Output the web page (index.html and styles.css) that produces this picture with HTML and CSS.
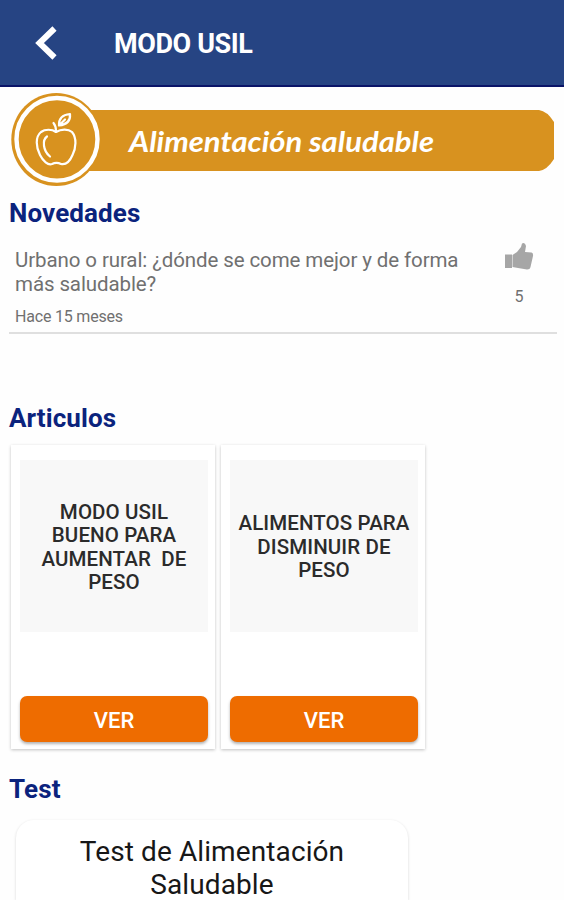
FILE: index.html
```html
<!DOCTYPE html>
<html lang="es">
<head>
    <meta charset="UTF-8">
    <meta name="viewport" content="width=device-width, initial-scale=1.0">
    <title>MODO USIL</title>
    <link rel="stylesheet" href="styles.css">
</head>
<body>

<header>
    <button class="back" aria-label="Volver">
        <svg width="24" height="36" viewBox="0 0 24 36"><path d="M20.5 3.500 L5.500 18 L20.5 32.500" fill="none" stroke="#fff" stroke-width="6"/></svg>
    </button>
    <h1>MODO USIL</h1>
</header>

<main>
    <svg class="banner" width="564" height="106" viewBox="0 87 564 106" role="img">
        <path d="M60 110 H539 Q547 111 554 122 V159 Q547 170 539 171 H60 Z" fill="#d8921f"/>
        <ellipse cx="56.3" cy="139.500" rx="45" ry="46.500" fill="#d8921f"/>
        <ellipse cx="57" cy="139.300" rx="40.500" ry="41.300" fill="none" stroke="#fff" stroke-width="4.400"/>
        <g fill="none" stroke="#fff" stroke-width="2.2" stroke-linecap="round" stroke-linejoin="round">
            <path d="M56 132 C52 129 45 129 41 132 C35 137 36 147 40 155 C43 161 48 165.500 52 164 C55 162.500 58 162.500 61 164 C66 165 70 161 72.500 155 C76 148 77 138 72 132 C68 128.500 61 129 56 132 Z"/>
            <path d="M56 131 Q56 126 53.500 123"/>
            <path d="M59 125.500 Q58.500 115 70 114 Q71 124 59 125.500 L65 119.500"/>
            <path d="M47 136.500 C42 140 43 151 50 156.500"/>
        </g>
        <text class="banner-text" x="129" y="151.500" textLength="305" lengthAdjust="spacingAndGlyphs">Alimentación saludable</text>
    </svg>

    <h2>Novedades</h2>
    <div class="news-item">
        <div class="news-body">
            <p class="news-title">Urbano o rural: ¿dónde se come mejor y de forma<br>más saludable?</p>
            <p class="news-date">Hace 15 meses</p>
        </div>
        <div class="likes">
            <svg width="30" height="30" viewBox="0 0 30 30" fill="#a6a6a6"><path d="M1 12.500 H8 V26 H1 Z"/><path d="M8.500 13 L13 10 L17 5 L18 1.500 Q21 0 22 4 L21 10 L27.500 10.500 Q29.500 11 29 14 L26.500 25 Q26 27.500 23 27.500 L14 26 L8.500 25 Z"/></svg>
            <span>5</span>
        </div>
    </div>

    <h2>Articulos</h2>
    <div class="articles">
        <div class="card">
            <div class="card-title">MODO USIL<br>BUENO PARA<br>AUMENTAR&nbsp; DE<br>PESO</div>
            <button class="ver">VER</button>
        </div>
        <div class="card">
            <div class="card-title">ALIMENTOS PARA<br>DISMINUIR DE<br>PESO</div>
            <button class="ver">VER</button>
        </div>
    </div>

    <h2>Test</h2>
    <div class="test-card">Test de Alimentación<br>Saludable</div>
</main>

</body>
</html>
```
FILE: styles.css
```css
* { box-sizing: border-box; }
body { font-family: Roboto, "Liberation Sans", sans-serif; margin: 0; height: 900px; overflow: hidden; background-color: #fefefe; }
header { display: flex; align-items: center; height: 87px; padding-left: 34px; background-color: #264483; border-bottom: 2px solid #0a1468; }
.back { width: 80px; height: 36px; padding: 0; border: none; background: none; text-align: left; }
.back svg { display: block; }
h1 { margin: 0; padding-top: 3px; color: #fff; font-size: 27px; font-weight: 700; letter-spacing: -0.4px; line-height: 32px; }
.banner { display: block; }
.banner-text { font-family: Lato, sans-serif; font-size: 28px; font-weight: 700; font-style: italic; fill: #fff; }
h2 { margin: 0; padding-left: 9px; color: #0b237d; font-size: 26px; font-weight: 700; letter-spacing: 0.1px; line-height: 40px; }
.news-item { display: flex; justify-content: space-between; margin: 0 7px 0 9px; height: 101px; padding: 15px 22px 0 6px; border-bottom: 2px solid #dfdfdf; color: #707070; }
.news-title { margin: 0; font-size: 20.5px; line-height: 24px; letter-spacing: -0.1px; white-space: nowrap; }
.news-date { margin: 11px 0 0; font-size: 16px; line-height: 19px; letter-spacing: -0.2px; }
.likes { display: flex; flex-direction: column; align-items: center; gap: 15px; width: 32px; margin-top: -6px; font-size: 16px; line-height: 19px; }
.news-item + h2 { margin-top: 64px; }
.articles { display: flex; gap: 6px; margin: 7px 0 0 11px; }
.card { display: flex; flex-direction: column; justify-content: space-between; width: 204px; height: 304px; padding: 15px 7px 7px 9px; background-color: #fff; box-shadow: 0 1px 3px rgba(0, 0, 0, 0.24); }
.card-title { display: flex; align-items: center; justify-content: center; height: 172px; padding-top: 3px; background-color: #f8f8f8; color: #2b2b2b; font-size: 20.5px; font-weight: 500; letter-spacing: 0.1px; line-height: 23.5px; text-align: center; }
.ver { height: 46px; padding: 2px 0 0; border: none; border-radius: 7px; background-color: #ee6c00; color: #fff; font-family: inherit; font-size: 22px; font-weight: 500; box-shadow: 0 2px 3px rgba(0, 0, 0, 0.3); }
.articles + h2 { margin-top: 20px; }
.test-card { width: 392px; height: 80px; margin: 11px 0 0 16px; padding-top: 15px; border-radius: 18px 18px 0 0; background-color: #fff; box-shadow: 0 1px 3px rgba(0, 0, 0, 0.16); color: #171717; font-size: 28px; letter-spacing: 0.1px; line-height: 33px; text-align: center; }
```
